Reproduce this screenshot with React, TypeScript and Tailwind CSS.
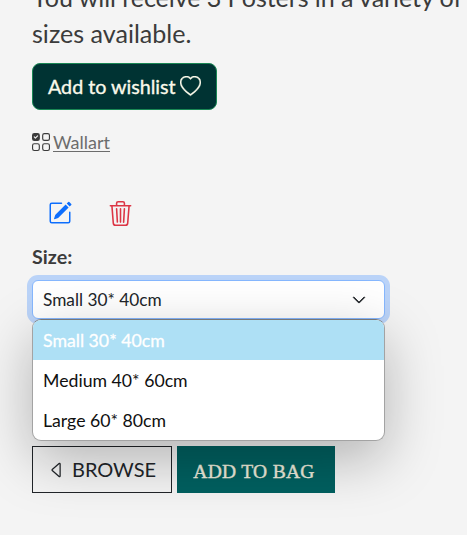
import React from "react";
import { BsHeart, BsUiChecksGrid, BsPencilSquare, BsTrash3, BsCaretLeft, BsChevronDown } from "react-icons/bs";

const options = ["Small 30* 40cm", "Medium 40* 60cm", "Large 60* 80cm"];

function SizeSelect() {
  return (
    <div className="relative mt-[9px] w-[353px]">
      <div className="flex h-[39px] items-center justify-between rounded-md border border-[#86b7fe] bg-white pr-[18px] pl-[10px] text-[17.25px] text-[#212529] shadow-[0_0_0_5px_#bad3f8]">
        <span>{options[0]}</span>
        <BsChevronDown className="size-[14px] stroke-[0.9]" />
      </div>
      <ul className="absolute top-[39px] left-0 z-10 h-[122px] w-[353px] overflow-hidden rounded-[9px] border border-[#a3a3a3] border-t-[#777] bg-white text-[17.7px] text-[#101010] shadow-[0_18px_56px_rgba(0,0,0,0.27)]">
        {options.map((option, i) => (
          <li
            key={option}
            className={`flex h-10 items-center pt-0.5 pl-[10px] ${i === 0 ? "bg-[#aee0f5] text-white [-webkit-text-stroke:0.3px_white]" : ""}`}
          >
            {option}
          </li>
        ))}
      </ul>
    </div>
  );
}

export default function App() {
  return (
    <main className="h-[535px] overflow-hidden bg-[#f4f4f4] pl-8 font-['Lato',sans-serif] text-[#3b3b3b]">
      <p className="-mt-[21px] text-[25.1px] leading-9 whitespace-nowrap">
        <span className="tracking-[-0.09px]">You will receive 3 Posters in a variety of</span>
        <br />
        sizes available.
      </p>
      <button className="mt-[12px] flex h-[47px] w-[185px] items-center gap-1 rounded-lg border border-[#198754] bg-[#003333] pl-[15px] text-[19.7px] whitespace-nowrap text-[#faf9ea] [-webkit-text-stroke:0.35px_#faf9ea]">
        Add to wishlist
        <BsHeart className="size-[21px] shrink-0 stroke-[0.3]" />
      </button>
      <div className="mt-5 flex h-6 items-center gap-[3px] text-[18px] text-[#6c6c6c]">
        <BsUiChecksGrid className="size-[18px] text-[#3b3b3b]" />
        <a className="underline underline-offset-2">Wallart</a>
      </div>
      <div className="mt-[47px] flex h-6 items-center pl-4">
        <BsPencilSquare className="size-6 text-[#0d6efd]" />
        <BsTrash3 className="ml-9 size-[25px] text-[#dc3545]" />
      </div>
      <div className="mt-[18px] h-7 text-[19.7px] leading-7 font-bold">Size:</div>
      <SizeSelect />
      <div className="mt-[127px] flex gap-[5px]">
        <button className="flex h-[47px] w-[140px] items-center gap-[5px] border border-[#212529] pb-0.5 pl-[14px] text-[20px] text-[#212529]">
          <BsCaretLeft className="mt-0.5 size-5" />
          BROWSE
        </button>
        <button className="h-[47px] w-[158px] bg-[#006060] pt-[5px] pr-1 font-['Liberation_Serif',serif] text-[19.5px] tracking-[0.3px] text-[#eeebdc] [-webkit-text-stroke:0.4px_#eeebdc]">
          ADD TO BAG
        </button>
      </div>
    </main>
  );
}
